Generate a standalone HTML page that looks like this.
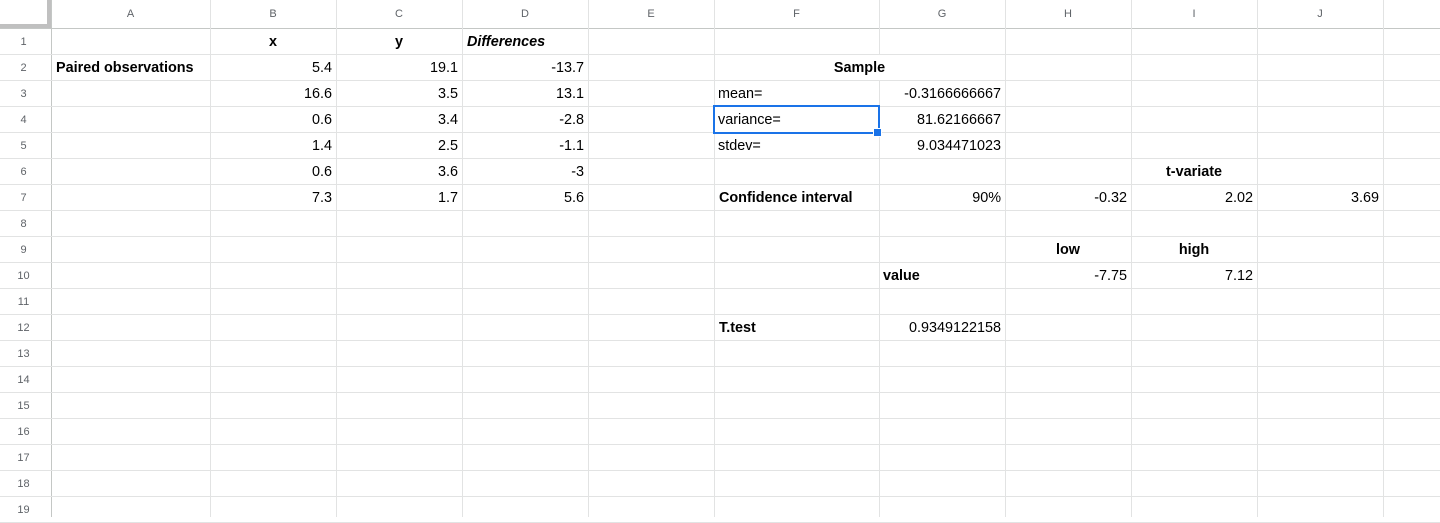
<!DOCTYPE html>
<html><head><style>
body{margin:0;width:1440px;height:517px;overflow:hidden;background:#fff;font-family:"Liberation Sans",Arial,sans-serif;position:relative}
.v{position:absolute;top:0;width:1px;height:517px;background:#e2e3e3}
.h{position:absolute;left:0;height:1px;width:1440px;background:#e2e3e3}
.t{position:absolute;font-size:14.4px;color:#000;line-height:26px;height:26px;white-space:nowrap;overflow:hidden}
.b{font-weight:bold}
.r{text-align:right}
.c{text-align:center}
.hd{position:absolute;font-size:11px;color:#5f6368;text-align:center;line-height:28px;top:0}
.rn{position:absolute;left:0;width:47px;font-size:11px;color:#5f6368;text-align:center;line-height:26px}
</style></head><body>
<div style="position:absolute;left:0;top:0;width:1440px;height:28px;background:#fff;border-bottom:1px solid #c4c7c5"></div>
<div style="position:absolute;left:0;top:0;width:51px;height:517px;border-right:1px solid #c4c7c5"></div>
<div style="position:absolute;left:0;top:0;width:47px;height:24px;border-right:4px solid #c0c0c0;border-bottom:4px solid #c0c0c0"></div>
<div id="g"></div>
<script>
var cols=[51,210,336,462,588,714,879,1005,1131,1257,1383];
var L="ABCDEFGHIJK",h="";
for(var i=1;i<cols.length;i++)h+='<div class="v" style="left:'+cols[i]+'px;background:#e2e3e3"></div>';
for(var i=0;i<cols.length;i++){var w=(cols[i+1]||1509)-cols[i];h+='<div class="hd" style="left:'+cols[i]+'px;width:'+w+'px">'+L[i]+'</div>';}
for(var r=1;r<=19;r++){var y=28+(r-1)*26;h+='<div class="h" style="top:'+(y+26)+'px"></div><div class="rn" style="top:'+(y+1)+'px">'+r+'</div>';}
document.getElementById('g').innerHTML=h;
</script>
<div class="t b c" style="left:210px;width:126px;top:29px">x</div>
<div class="t b c" style="left:336px;width:126px;top:29px">y</div>
<div class="t b" style="left:467px;top:29px;font-style:italic">Differences</div>
<div class="t b" style="left:56px;width:154px;top:55px">Paired observations</div>

<div class="t r" style="left:210px;width:122px;top:55px">5.4</div>
<div class="t r" style="left:210px;width:122px;top:81px">16.6</div>
<div class="t r" style="left:210px;width:122px;top:107px">0.6</div>
<div class="t r" style="left:210px;width:122px;top:133px">1.4</div>
<div class="t r" style="left:210px;width:122px;top:159px">0.6</div>
<div class="t r" style="left:210px;width:122px;top:185px">7.3</div>

<div class="t r" style="left:336px;width:122px;top:55px">19.1</div>
<div class="t r" style="left:336px;width:122px;top:81px">3.5</div>
<div class="t r" style="left:336px;width:122px;top:107px">3.4</div>
<div class="t r" style="left:336px;width:122px;top:133px">2.5</div>
<div class="t r" style="left:336px;width:122px;top:159px">3.6</div>
<div class="t r" style="left:336px;width:122px;top:185px">1.7</div>

<div class="t r" style="left:462px;width:122px;top:55px">-13.7</div>
<div class="t r" style="left:462px;width:122px;top:81px">13.1</div>
<div class="t r" style="left:462px;width:122px;top:107px">-2.8</div>
<div class="t r" style="left:462px;width:122px;top:133px">-1.1</div>
<div class="t r" style="left:462px;width:122px;top:159px">-3</div>
<div class="t r" style="left:462px;width:122px;top:185px">5.6</div>

<div style="position:absolute;left:715px;top:55px;width:289px;height:25px;background:#fff"></div>
<div class="t b c" style="left:714px;width:291px;top:55px">Sample</div>
<div class="t" style="left:718px;top:81px">mean=</div>
<div class="t" style="left:718px;top:107px">variance=</div>
<div class="t" style="left:718px;top:133px">stdev=</div>
<div class="t r" style="left:879px;width:122px;top:81px">-0.3166666667</div>
<div class="t r" style="left:879px;width:122px;top:107px">81.62166667</div>
<div class="t r" style="left:879px;width:122px;top:133px">9.034471023</div>
<div style="position:absolute;left:713px;top:105px;width:163px;height:25px;border:2px solid #1a73e8"></div>
<div style="position:absolute;left:873px;top:128px;width:7px;height:7px;background:#1a73e8;border:1px solid #fff"></div>

<div class="t b c" style="left:1131px;width:126px;top:159px">t-variate</div>
<div class="t b" style="left:719px;top:185px">Confidence interval</div>
<div class="t r" style="left:879px;width:122px;top:185px">90%</div>
<div class="t r" style="left:1005px;width:122px;top:185px">-0.32</div>
<div class="t r" style="left:1131px;width:122px;top:185px">2.02</div>
<div class="t r" style="left:1257px;width:122px;top:185px">3.69</div>

<div class="t b c" style="left:1005px;width:126px;top:237px">low</div>
<div class="t b c" style="left:1131px;width:126px;top:237px">high</div>
<div class="t b" style="left:883px;top:263px">value</div>
<div class="t r" style="left:1005px;width:122px;top:263px">-7.75</div>
<div class="t r" style="left:1131px;width:122px;top:263px">7.12</div>

<div class="t b" style="left:719px;top:315px">T.test</div>
<div class="t r" style="left:879px;width:122px;top:315px">0.9349122158</div>
</body></html>
